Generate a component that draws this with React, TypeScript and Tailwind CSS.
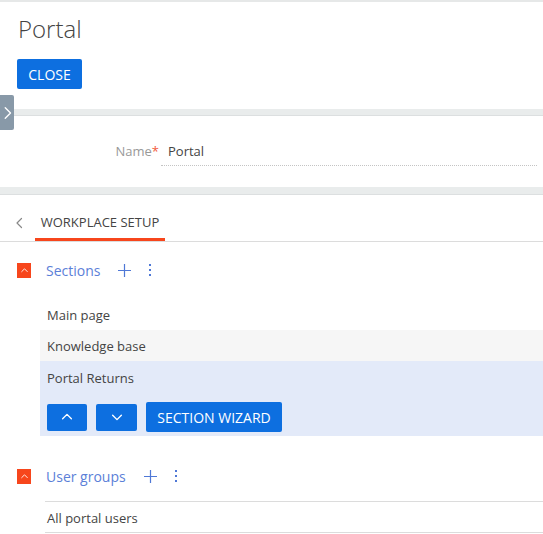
import React from 'react'

const font = { fontFamily: '"Open Sans", "Liberation Sans", sans-serif' }

function Chevron({ dir, className }: { dir: 'up' | 'down' | 'left' | 'right'; className?: string }) {
  const d = {
    up: 'M3 10 L8 5 L13 10',
    down: 'M3 6 L8 11 L13 6',
    left: 'M10 2 L4 8 L10 14',
    right: 'M6 2 L12 8 L6 14',
  }[dir]
  return (
    <svg viewBox="0 0 16 16" className={className} fill="none" stroke="currentColor">
      <path d={d} strokeWidth="1.6" strokeLinecap="round" strokeLinejoin="round" />
    </svg>
  )
}

function GroupHeader({ title }: { title: string }) {
  return (
    <div className="flex h-[30px] items-center pl-[17px]">
      <span className="flex h-[15px] w-[14px] items-center justify-center bg-[#f7461c] text-white">
        <Chevron dir="up" className="h-[9px] w-[9px]" />
      </span>
      <span className="ml-[15px] text-[14px] text-[#5b80d8]">{title}</span>
      <svg viewBox="0 0 14 14" className="ml-[18px] h-[13px] w-[13px] text-[#4f78d6]" stroke="currentColor">
        <path d="M7 0 V14 M0 7 H14" strokeWidth="1.3" />
      </svg>
      <span className="ml-[18px] flex flex-col gap-[3px]">
        <span className="h-[2px] w-[2px] bg-[#4f78d6]" />
        <span className="h-[2px] w-[2px] bg-[#4f78d6]" />
        <span className="h-[2px] w-[2px] bg-[#4f78d6]" />
      </span>
    </div>
  )
}

export default function App() {
  return (
    <div className="relative w-full overflow-hidden bg-white text-[#444]" style={font}>
      <div className="h-[2px] bg-[#e6e8e8]" />

      <div className="px-[17px] pt-[10px] pb-[20px]">
        <h1 className="pl-px text-[24px] font-light leading-[34px] text-[#444]">Portal</h1>
        <button className="mt-[13px] h-[30px] w-[65px] rounded-[2px] bg-[#0d6fe0] text-[14px] text-white">
          CLOSE
        </button>
      </div>

      <div className="absolute left-0 top-[95px] flex h-[35px] w-[14px] items-center justify-center rounded-r-[2px] bg-[#8899a8] text-white">
        <Chevron dir="right" className="h-[16px] w-[14px]" />
      </div>

      <div className="h-[7px] border-b border-[#dcdfe0] bg-[#e9ecec]" />

      <div className="flex h-[71px] items-start pt-[26px] pr-[6px]">
        <div className="w-[161px] pr-[2px] text-right text-[13px] text-[#999]">
          Name<span className="text-[#f25a3c]">*</span>
        </div>
        <div className="flex-1 border-b border-dotted border-[#c4c4c4] pb-[3px] pl-[7px] text-[13px] text-[#444]">
          Portal
        </div>
      </div>

      <div className="h-[8px] border-b border-[#dcdfe0] bg-[#e9ecec]" />

      <div className="flex h-[47px] items-end border-b border-[#dcdcdc] pl-[14px]">
        <div className="flex h-[34px] items-center pb-[3px]">
          <Chevron dir="left" className="h-[14px] w-[12px] text-[#888]" />
        </div>
        <div className="ml-[9px] flex h-[34px] w-[130px] items-center justify-center border-b-[3px] border-[#f7461c] text-[13px] text-[#444]">
          WORKPLACE SETUP
        </div>
      </div>

      <div className="pt-[13px]">
        <GroupHeader title="Sections" />
      </div>

      <div className="mt-[14px] pl-[40px] text-[13px]">
        <div className="flex h-[31px] items-center pl-[7px] pt-[3px]">Main page</div>
        <div className="flex h-[31px] items-center bg-[#f6f6f6] pl-[7px] pt-[3px]">Knowledge base</div>
        <div className="h-[75px] bg-[#e3eaf9] pl-[7px]">
          <div className="flex h-[41px] items-center pb-[6px]">Portal Returns</div>
          <div className="flex items-center gap-[9px]">
            <button className="flex h-[27px] w-[40px] items-center justify-center rounded-[2px] bg-[#0d6fe0] text-white">
              <Chevron dir="up" className="h-[14px] w-[14px]" />
            </button>
            <button className="flex h-[27px] w-[41px] items-center justify-center rounded-[2px] bg-[#0d6fe0] text-white">
              <Chevron dir="down" className="h-[14px] w-[14px]" />
            </button>
            <button className="h-[30px] w-[136px] rounded-[2px] bg-[#0d6fe0] text-[14px] text-white">
              SECTION WIZARD
            </button>
          </div>
        </div>
      </div>

      <div className="pt-[25px]">
        <GroupHeader title="User groups" />
      </div>

      <div className="mt-[10px] ml-[45px] border-t border-[#dcdcdc] text-[13px]">
        <div className="flex h-[31px] items-center border-b border-[#dcdcdc] pl-[2px] pt-[3px]">All portal users</div>
      </div>
    </div>
  )
}
